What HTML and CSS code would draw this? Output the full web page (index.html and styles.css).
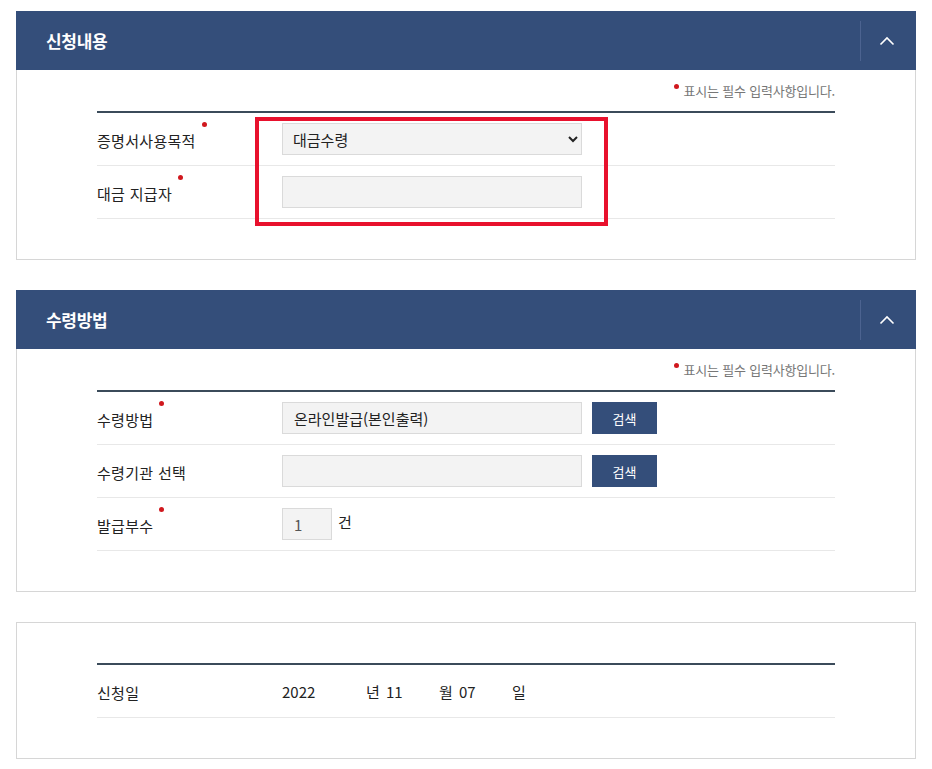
FILE: index.html
```html
<!DOCTYPE html>
<html lang="ko">
  <head>
    <meta charset="utf-8">
    <title>신청내용</title>
    <link rel="stylesheet" href="styles.css">
  </head>

  <body>
    <div class="Page">
      <!-- 신청내용 -->
      <div class="Panel">
        <div class="PanelHead">
          <h2>신청내용</h2>
          <button class="toggle" type="button">
            <svg width="16" height="10" viewBox="0 0 16 10"><path d="M1.5 8.5 L8 2 L14.5 8.5" fill="none" stroke="#fff" stroke-width="1.6"/></svg>
          </button>
        </div>
        <div class="PanelBody">
          <p class="note"><span class="dot"></span>표시는 필수 입력사항입니다.</p>
          <div class="formTable">
            <div class="row">
              <div class="label"><span class="req">증명서사용목적</span></div>
              <div class="field">
                <select class="inp">
                  <option>대금수령</option>
                </select>
              </div>
            </div>
            <div class="row">
              <div class="label"><span class="req">대금 지급자</span></div>
              <div class="field">
                <input class="inp" type="text" value="">
              </div>
            </div>
            <div class="highlight"></div>
          </div>
        </div>
      </div>

      <!-- 수령방법 -->
      <div class="Panel">
        <div class="PanelHead">
          <h2>수령방법</h2>
          <button class="toggle" type="button">
            <svg width="16" height="10" viewBox="0 0 16 10"><path d="M1.5 8.5 L8 2 L14.5 8.5" fill="none" stroke="#fff" stroke-width="1.6"/></svg>
          </button>
        </div>
        <div class="PanelBody">
          <p class="note"><span class="dot"></span>표시는 필수 입력사항입니다.</p>
          <div class="formTable">
            <div class="row">
              <div class="label"><span class="req">수령방법</span></div>
              <div class="field">
                <input class="inp" type="text" value="온라인발급(본인출력)" readonly>
                <button class="btn" type="button">검색</button>
              </div>
            </div>
            <div class="row">
              <div class="label"><span>수령기관 선택</span></div>
              <div class="field">
                <input class="inp" type="text" value="" readonly>
                <button class="btn" type="button">검색</button>
              </div>
            </div>
            <div class="row">
              <div class="label"><span class="req">발급부수</span></div>
              <div class="field">
                <input class="inp qty" type="text" value="1">
                <span class="unit">건</span>
              </div>
            </div>
          </div>
        </div>
      </div>

      <!-- 신청일 -->
      <div class="Panel">
        <div class="PanelBody plain">
          <div class="formTable">
            <div class="row">
              <div class="label"><span>신청일</span></div>
              <div class="field date">
                <span class="year">2022</span>
                <span class="unitTxt">년</span>
                <span class="md">11</span>
                <span class="unitTxt">월</span>
                <span class="md">07</span>
                <span class="unitTxt">일</span>
              </div>
            </div>
          </div>
        </div>
      </div>
    </div>
  </body>
</html>
```

FILE: styles.css
```css
* {
  box-sizing: border-box;
}

body {
  margin: 0;
  background: #fff;
  font-family: "Noto Sans CJK KR", "Noto Sans", sans-serif;
  color: #222;
}

.Page {
  padding: 11px 16px 0 16px;
  width: 932px;
}

.Panel {
  width: 900px;
  margin-bottom: 30px;
}

.PanelHead {
  height: 59px;
  background-color: #344e7a;
  display: flex;
  align-items: center;
  justify-content: space-between;
}

.PanelHead h2 {
  margin: 0 0 0 30px;
  font-size: 17px;
  font-weight: 700;
  color: #fff;
  letter-spacing: -0.3px;
}

.PanelHead .toggle {
  width: 56px;
  height: 40px;
  border: none;
  border-left: 1px solid #4c6390;
  background: transparent;
  display: flex;
  align-items: center;
  justify-content: center;
  padding: 0 4px 0 0;
  cursor: pointer;
}

.PanelBody {
  border: 1px solid #d6d6d6;
  padding: 12px 80px 40px 80px;
}

.PanelHead + .PanelBody {
  border-top: none;
}

.PanelBody.plain {
  padding-top: 40px;
}

.note {
  margin: 0 0 12px 0;
  height: 17px;
  line-height: 17px;
  text-align: right;
  font-size: 13px;
  color: #777;
  letter-spacing: -0.2px;
}

.dot {
  display: inline-block;
  width: 5px;
  height: 5px;
  border-radius: 50%;
  background: #d0181e;
  vertical-align: top;
  margin: 2px 5px 0 0;
}

.formTable {
  position: relative;
  border-top: 2px solid #3b4b5a;
}

.row {
  display: flex;
  align-items: center;
  height: 53px;
  border-bottom: 1px solid #e8e8e8;
}

.label {
  width: 185px;
  font-size: 15px;
  letter-spacing: 0.3px;
  color: #222;
  padding-top: 2px;
}

.label span {
  position: relative;
}

.req::after {
  content: "";
  position: absolute;
  right: -11px;
  top: -8px;
  width: 5px;
  height: 5px;
  border-radius: 50%;
  background: #d0181e;
}

.field {
  display: flex;
  align-items: center;
  font-size: 15px;
}

.inp {
  width: 300px;
  height: 32px;
  border: 1px solid #dadada;
  background-color: #f3f3f3;
  font-family: inherit;
  font-size: 15px;
  color: #222;
  padding: 0 11px;
  border-radius: 0;
  outline: none;
}

select.inp {
  padding: 0 6px;
}

.inp.qty {
  width: 50px;
  color: #555;
}

.unit {
  margin-left: 6px;
  margin-top: -6px;
  font-size: 15px;
}

.btn {
  width: 65px;
  height: 32px;
  margin-left: 10px;
  border: none;
  background-color: #344e7a;
  color: #fff;
  font-family: inherit;
  font-size: 13px;
  cursor: pointer;
}

.date span {
  display: inline-block;
}

.date .year {
  width: 84px;
}

.date .md {
  width: 53px;
}

.date .unitTxt {
  width: 20px;
}

.highlight {
  position: absolute;
  left: 158px;
  top: 4px;
  width: 353px;
  height: 109px;
  border: 4px solid #e8112d;
  pointer-events: none;
}
```
